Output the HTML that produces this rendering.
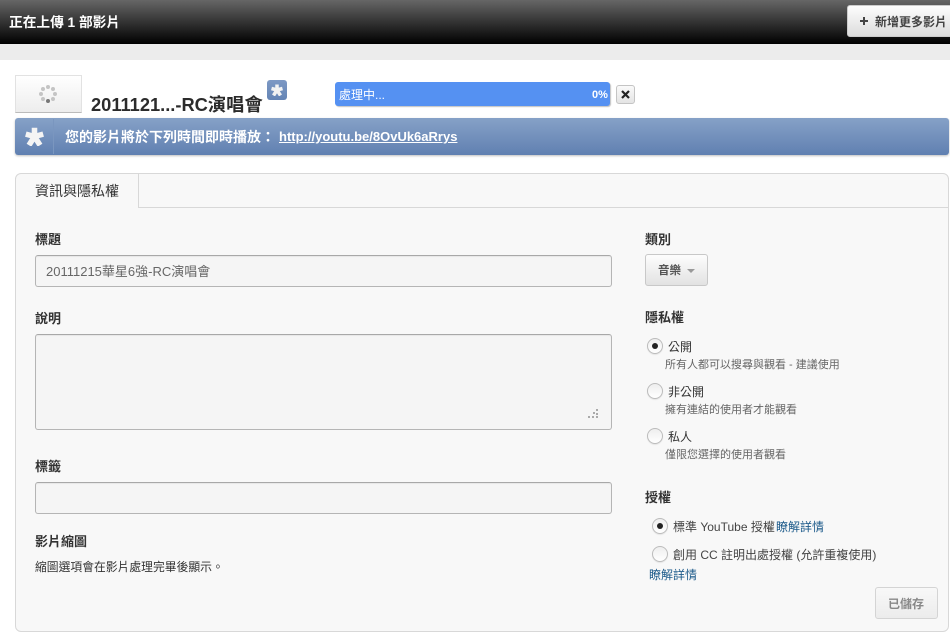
<!DOCTYPE html>
<html lang="zh-Hant">
<head>
<meta charset="utf-8">
<title>上傳</title>
<style>
html,body{margin:0;padding:0;background:#fff;}
body{width:950px;height:635px;position:relative;overflow:hidden;font-family:"Liberation Sans","Noto Sans CJK TC","WenQuanYi Zen Hei",sans-serif;font-size:12px;color:#333;}
.a{position:absolute;box-sizing:border-box;}
.t{position:absolute;white-space:nowrap;line-height:16px;}
.lb{font-weight:bold;font-size:13px;color:#333;}
.inp{background:#f5f5f5;border:1px solid #b5b5b5;border-top-color:#a8a8a8;border-radius:3px;box-shadow:inset 0 1px 1px rgba(0,0,0,.06);}
.rd{position:absolute;box-sizing:border-box;width:16px;height:16px;border-radius:50%;border:1px solid #bcbcbc;background:linear-gradient(#eee,#fff);box-shadow:0 1px 1px rgba(0,0,0,.08);}
.rd.on:after{content:"";position:absolute;left:4px;top:4px;width:6px;height:6px;border-radius:50%;background:#222;}
.sub{color:#666;font-size:11px;}
.opt{color:#333;font-size:12px;}
a{color:#1c5a8a;text-decoration:none;}
</style>
</head>
<body>
<div class="a" style="left:0;top:0;width:950px;height:44px;background:linear-gradient(#666,#000);"></div>
<div class="a" style="left:0;top:44px;width:950px;height:16px;background:#ececec;"></div>
<div class="t" style="left:9px;top:15px;color:#fff;font-weight:bold;font-size:13.7px;">正在上傳 1 部影片</div>
<div class="a" style="left:847px;top:5px;width:110px;height:32px;background:linear-gradient(#fdfdfd,#dcdcdc);border:1px solid #ccc;border-radius:3px;"></div>
<svg class="a" style="left:859px;top:16px;" width="10" height="10"><path d="M5 1V9M1 5H9" stroke="#444" stroke-width="2"/></svg>
<div class="t" style="left:875px;top:14px;font-weight:bold;font-size:12px;color:#444;">新增更多影片</div>

<div class="a" style="left:15px;top:75px;width:67px;height:38px;background:linear-gradient(#fff,#ededed);border:1px solid #e2e2e2;border-bottom-color:#bbb;"></div>
<svg class="a" style="left:38px;top:84px;" width="20" height="20">
<g fill="#c4c4c4"><circle cx="10" cy="3" r="2"/><circle cx="15" cy="5" r="2"/><circle cx="17" cy="10" r="2"/><circle cx="15" cy="15" r="2"/><circle cx="5" cy="15" r="2"/><circle cx="3" cy="10" r="2"/><circle cx="5" cy="5" r="2"/></g>
<circle cx="10" cy="17" r="2" fill="#777"/></svg>
<div class="t" style="left:91px;top:95px;font-size:18.3px;line-height:20px;font-weight:bold;color:#2b2b2b;">2011121...-RC演唱會</div>
<div class="a" style="left:267px;top:80px;width:20px;height:20px;border-radius:3px;background:linear-gradient(#7d99c4,#6484b5);"></div>
<svg class="a" style="left:271px;top:84px;" width="12" height="12" viewBox="0 0 24 24"><path d="M12 12V1M12 12L23 9M12 12L19 23M12 12L5 23M12 12L1 9" fill="none" stroke="#f2f2f2" stroke-width="7"/></svg>

<div class="a" style="left:335px;top:82px;width:275px;height:24px;background:#5591f2;border-radius:3px;box-shadow:1px 1px 1px rgba(0,0,0,.25);"></div>
<div class="t" style="left:339px;top:87px;color:#fff;font-size:12px;">處理中...</div>
<div class="t" style="left:592px;top:87px;color:#fff;font-size:11px;font-weight:bold;">0%</div>
<div class="a" style="left:616px;top:85px;width:19px;height:19px;background:linear-gradient(#fafafa,#e4e4e4);border:1px solid #c4c4c4;border-radius:3px;"></div>
<svg class="a" style="left:621px;top:90px;" width="9" height="9"><path d="M1 1L8 8M8 1L1 8" stroke="#222" stroke-width="2.2"/></svg>

<div class="a" style="left:15px;top:118px;width:934px;height:37px;background:linear-gradient(#86a1c7,#6080b1);border-radius:3px;box-shadow:0 1px 2px rgba(0,0,0,.25);"></div>
<div class="a" style="left:53px;top:119px;width:1px;height:35px;background:#7a96bf;"></div>
<svg class="a" style="left:25px;top:127px;" width="19" height="19" viewBox="0 0 24 24"><path d="M12 12V1M12 12L23 9M12 12L19 23M12 12L5 23M12 12L1 9" fill="none" stroke="#f4f4f4" stroke-width="7"/></svg>
<div class="t" style="left:65px;top:129px;color:#fff;font-weight:bold;font-size:14px;">您的影片將於下列時間即時播放：</div>
<div class="t" style="left:279px;top:129px;color:#fff;font-weight:bold;font-size:13px;text-decoration:underline;">http://youtu.be/8OvUk6aRrys</div>

<div class="a" style="left:15px;top:173px;width:934px;height:459px;background:#f8f8f8;border:1px solid #d8d8d8;border-radius:6px;"></div>
<div class="a" style="left:138px;top:207px;width:811px;height:1px;background:#d8d8d8;"></div>
<div class="a" style="left:138px;top:174px;width:1px;height:34px;background:#d8d8d8;"></div>
<div class="t" style="left:35px;top:183px;font-size:14px;color:#333;">資訊與隱私權</div>

<div class="t lb" style="left:35px;top:232px;">標題</div>
<div class="a inp" style="left:35px;top:255px;width:577px;height:32px;"></div>
<div class="t" style="left:46px;top:264px;font-size:13px;color:#666;">20111215華星6強-RC演唱會</div>

<div class="t lb" style="left:35px;top:311px;">說明</div>
<div class="a inp" style="left:35px;top:334px;width:577px;height:96px;"></div>
<svg class="a" style="left:586px;top:408px;" width="14" height="12" fill="#aaa"><rect x="10" y="1" width="2" height="2"/><rect x="7" y="4" width="2" height="2"/><rect x="10" y="5" width="2" height="2"/><rect x="2" y="8" width="2" height="2"/><rect x="6" y="8" width="2" height="2"/><rect x="10" y="8" width="2" height="2"/></svg>

<div class="t lb" style="left:35px;top:459px;">標籤</div>
<div class="a inp" style="left:35px;top:482px;width:577px;height:32px;"></div>

<div class="t lb" style="left:35px;top:534px;">影片縮圖</div>
<div class="t" style="left:35px;top:559px;font-size:11.8px;color:#333;">縮圖選項會在影片處理完畢後顯示。</div>

<div class="t lb" style="left:645px;top:232px;">類別</div>
<div class="a" style="left:645px;top:254px;width:63px;height:32px;background:linear-gradient(#fdfdfd,#e2e2e2);border:1px solid #c8c8c8;border-radius:3px;"></div>
<div class="t" style="left:658px;top:263px;font-size:11.5px;font-weight:bold;color:#555;">音樂</div>
<svg class="a" style="left:686px;top:268px;" width="10" height="6"><path d="M1 1H9L5 5Z" fill="#999"/></svg>

<div class="t lb" style="left:645px;top:310px;">隱私權</div>
<div class="rd on" style="left:647px;top:338px;"></div>
<div class="t opt" style="left:668px;top:339px;">公開</div>
<div class="t sub" style="left:665px;top:357px;">所有人都可以搜尋與觀看 - 建議使用</div>
<div class="rd" style="left:647px;top:383px;"></div>
<div class="t opt" style="left:668px;top:384px;">非公開</div>
<div class="t sub" style="left:665px;top:402px;">擁有連結的使用者才能觀看</div>
<div class="rd" style="left:647px;top:428px;"></div>
<div class="t opt" style="left:668px;top:429px;">私人</div>
<div class="t sub" style="left:665px;top:447px;">僅限您選擇的使用者觀看</div>

<div class="t lb" style="left:645px;top:490px;">授權</div>
<div class="rd on" style="left:652px;top:518px;"></div>
<div class="t opt" style="left:673px;top:519px;color:#444;">標準 YouTube 授權</div>
<div class="t" style="left:776px;top:519px;font-size:12px;"><a>瞭解詳情</a></div>
<div class="rd" style="left:652px;top:546px;"></div>
<div class="t opt" style="left:673px;top:547px;color:#444;font-size:12px;">創用 CC 註明出處授權 (允許重複使用)</div>
<div class="t" style="left:649px;top:567px;font-size:12px;"><a>瞭解詳情</a></div>

<div class="a" style="left:875px;top:587px;width:63px;height:32px;background:linear-gradient(#f8f8f8,#ececec);border:1px solid #d4d4d4;border-radius:3px;"></div>
<div class="t" style="left:888px;top:596px;font-size:12px;font-weight:bold;color:#888;">已儲存</div>
</body>
</html>
